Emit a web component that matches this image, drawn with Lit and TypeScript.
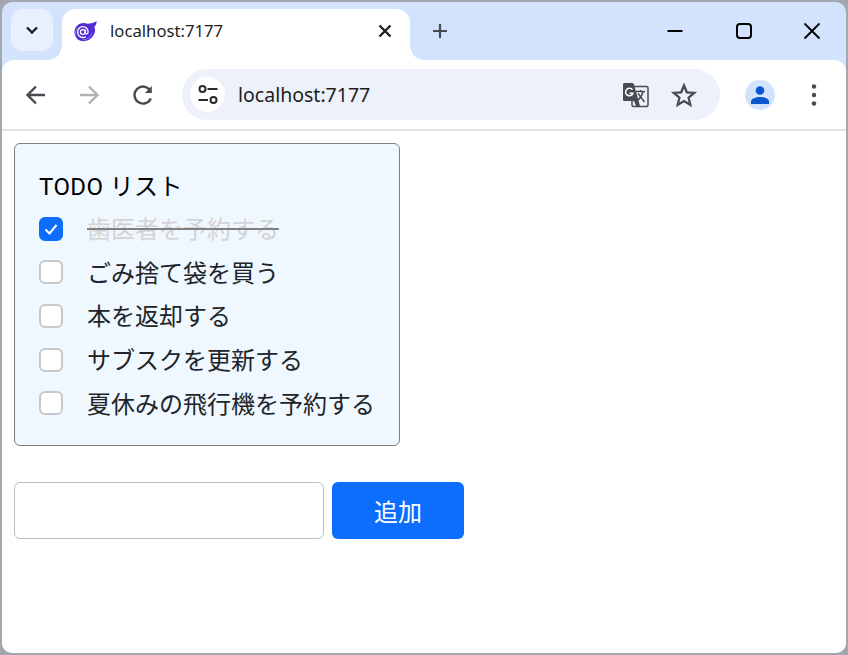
import { LitElement, html, css } from "lit";
import { customElement, state } from "lit/decorators.js";

@customElement("app-root")
export class AppRoot extends LitElement {
  static styles = css`
    :host { display: block; position: relative; width: 848px; height: 655px; overflow: hidden; background: #a3a7b0; font-family: "Noto Sans", "Noto Sans CJK JP", sans-serif; }
    * { box-sizing: border-box; }
    .window { position: relative; margin: 2px; width: 844px; height: 651px; border-radius: 10px; overflow: hidden; background: #d3e3fd; display: flex; flex-direction: column; }
    .strip { height: 58px; flex: none; display: flex; align-items: flex-start; padding: 7px 0 0 9px; position: relative; }
    .tabsearch { width: 42px; height: 42px; border-radius: 12px; background: #e9f0fd; display: flex; align-items: center; justify-content: center; margin-right: 9px; }
    .tab { width: 348px; height: 51px; background: #fff; border-radius: 14px 14px 0 0; position: relative; display: flex; align-items: center; padding: 0 0 8px 11px; z-index: 1; }
    .tab::before, .tab::after { content: ""; position: absolute; bottom: 0; width: 14px; height: 14px; }
    .tab::before { left: -14px; background: radial-gradient(circle at 0 0, transparent 13.5px, #fff 14px); }
    .tab::after { right: -14px; background: radial-gradient(circle at 100% 0, transparent 13.5px, #fff 14px); }
    .tabtitle { margin-left: 13px; font-size: 16.7px; color: #1f1f1f; flex: 1; white-space: nowrap; }
    .tabclose { width: 20px; height: 20px; display: flex; margin-right: 15px; }
    .plus { margin-left: 20px; margin-top: 12px; width: 20px; height: 20px; display: flex; }
    .caption { margin-left: auto; display: flex; height: 44px; align-items: center; }
    .capbtn { width: 68px; display: flex; justify-content: center; align-items: center; }
    .capbtn.shift { margin-left: -1px; margin-right: 1px; }
    .toolbar { height: 71px; flex: none; background: #fff; border-radius: 12px 12px 0 0; border-bottom: 2px solid #e3e3e3; display: flex; align-items: center; padding: 0 0 0 19px; position: relative; }
    .nav { width: 54px; display: flex; }
    .navrow { display: flex; width: 161px; padding-left: 1px; }
    .omni { width: 538px; height: 51px; border-radius: 26px; background: #ecf1fa; display: flex; align-items: center; padding: 0 22px 0 8px; }
    .site { width: 35px; height: 35px; border-radius: 50%; background: #fff; display: flex; align-items: center; justify-content: center; margin-right: 13px; }
    .url { font-size: 19.5px; color: #1f1f1f; flex: 1; white-space: nowrap; }
    .omni svg.t { margin-right: 20px; }
    .avatar { margin-left: 25px; width: 30px; height: 30px; border-radius: 50%; background: #d3e3fd; display: flex; align-items: center; justify-content: center; }
    .kebab { margin-left: 36px; display: flex; }
    .content { flex: 1; background: #fff; padding: 12px; }
    .card { width: 386px; height: 303px; background: #eff7ff; border: 1px solid #7b8087; border-radius: 6px; padding: 24px; }
    .title { font-family: Roboto, "Noto Sans CJK JP", sans-serif; font-size: 24px; line-height: 36px; letter-spacing: 0.4px; color: #000; margin-top: 1px; margin-bottom: 1px; }
    .row { display: flex; align-items: center; height: 43.6px; font-size: 24px; color: #212529; }
    .box { width: 24px; height: 24px; flex: none; border: 2px solid #c6c8cb; border-radius: 6px; background: #fff; margin: 2px 24px 0 0; display: flex; align-items: center; justify-content: center; }
    .box.on { background: #0d6efd; border-color: #0d6efd; }
    .done { color: #d3d3d3; text-decoration: line-through; text-decoration-color: #808080; text-decoration-thickness: 2px; }
    .form { display: flex; gap: 8px; margin-top: 36px; }
    .input { width: 310px; height: 57px; border: 1px solid #bcc0c4; border-radius: 6px; background: #fff; }
    .btn { width: 132px; height: 57px; border-radius: 6px; background: #0d6efd; color: #fff; font-size: 24px; display: flex; align-items: center; justify-content: center; }
  `;

  @state() items = [
    { t: "歯医者を予約する", d: true },
    { t: "ごみ捨て袋を買う", d: false },
    { t: "本を返却する", d: false },
    { t: "サブスクを更新する", d: false },
    { t: "夏休みの飛行機を予約する", d: false },
  ];

  render() {
    return html`
      <div class="window">
        <div class="strip">
          <div class="tabsearch">
            <svg width="16" height="16" viewBox="0 0 16 16"><path d="M3 5.500 8 10.500 13 5.500" fill="none" stroke="#1f1f1f" stroke-width="2.400"/></svg>
          </div>
          <div class="tab">
            <svg width="24" height="24" viewBox="0 0 24 24">
              <path d="M23.500 2c.3 2.500-.6 4.500-2.200 5.800 1.100 2.200 1.100 4.700 0 7C19.500 19 15.500 22.200 10.500 22.200 5.300 22.200 1.500 18.200 1.500 13 1.500 8 5.500 4 10.500 4c1.500 0 2.800.2 4 .7 3.300-.1 6.700-.9 9-2.700Z" fill="#512bd4"/>
              <path d="M3.300 17.500C2 15 2.300 11 4.800 8.700" fill="none" stroke="#8f78e6" stroke-width="1"/>
              <circle cx="9.800" cy="13" r="2.400" fill="none" stroke="#fff" stroke-width="1.300"/>
              <path d="M12.200 10.600v3.200c0 1.700 2.800 1.700 2.900-.9.100-3-2.200-5.200-5.200-5.200-3 0-5.300 2.400-5.300 5.400s2.300 5.400 5.300 5.400c1.100 0 2.100-.3 2.900-.8" fill="none" stroke="#fff" stroke-width="1.300"/>
              <path d="M9 20.800c4 .2 8.800-2 10.200-6.500" fill="none" stroke="#8f78e6" stroke-width="1"/>
            </svg>
            <span class="tabtitle">localhost:7177</span>
            <span class="tabclose"><svg width="20" height="20" viewBox="0 0 20 20"><path d="M4.500 4.500 15.500 15.500M15.500 4.500 4.500 15.500" stroke="#1f1f1f" stroke-width="2.400"/></svg></span>
          </div>
          <span class="plus"><svg width="20" height="20" viewBox="0 0 20 20"><path d="M10 3V17M3 10H17" stroke="#474a50" stroke-width="2.200"/></svg></span>
          <div class="caption">
            <span class="capbtn shift"><svg width="20" height="20" viewBox="0 0 20 20"><path d="M2.500 10H17.500" stroke="#000" stroke-width="2"/></svg></span>
            <span class="capbtn"><svg width="20" height="20" viewBox="0 0 20 20"><rect x="3" y="3" width="14" height="14" rx="3" fill="none" stroke="#000" stroke-width="2"/></svg></span>
            <span class="capbtn"><svg width="20" height="20" viewBox="0 0 20 20"><path d="M2.500 2.500 17.500 17.500M17.500 2.500 2.500 17.500" stroke="#000" stroke-width="1.800"/></svg></span>
          </div>
        </div>
        <div class="toolbar">
          <div class="navrow">
            <span class="nav"><svg width="28" height="28" viewBox="0 0 28 28"><path d="M23 14H6M14 5.500 5.500 14 14 22.500" fill="none" stroke="#474a50" stroke-width="2.400"/></svg></span>
            <span class="nav"><svg width="28" height="28" viewBox="0 0 28 28"><path d="M5 14H22M14 5.500 22.500 14 14 22.500" fill="none" stroke="#b0b1b3" stroke-width="2.400"/></svg></span>
            <span class="nav"><svg width="28" height="28" viewBox="0 0 28 28"><path d="M21.800 17.500A8.500 8.500 0 1 1 21 9.200" fill="none" stroke="#474a50" stroke-width="2.400"/><path d="M22.800 5V12H16Z" fill="#474a50"/></svg></span>
          </div>
          <div class="omni">
            <span class="site"><svg width="24" height="24" viewBox="0 0 24 24"><circle cx="6.500" cy="6" r="3" fill="none" stroke="#2a2b2e" stroke-width="2"/><path d="M11.500 6H21.500M2.500 17H12" stroke="#2a2b2e" stroke-width="2"/><circle cx="17.500" cy="17" r="3" fill="none" stroke="#2a2b2e" stroke-width="2"/></svg></span>
            <span class="url">localhost:7177</span>
            <svg class="t" width="28" height="28" viewBox="0 0 28 28">
              <rect x="10" y="5.500" width="16" height="20" rx="1.500" fill="#ecf1fa" stroke="#474a50" stroke-width="1.500"/>
              <path d="M1 3.500c0-1 .8-1.500 1.500-1.500H10c1 0 1.500.5 2 1.500L18 25h-4l-2-5H2.500C1.600 20 1 19.500 1 18.500Z" fill="#474a50"/>
              <path d="M10.500 8.800A3.800 3.800 0 1 0 11 12.200H7.500" fill="none" stroke="#fff" stroke-width="1.500"/>
              <path d="M14 10.500H23M18.500 9V10.500M21 10.500C20 15 17.500 18 15 19.500M16 12.500 22.500 21" fill="none" stroke="#474a50" stroke-width="1.500"/>
            </svg>
            <svg width="28" height="28" viewBox="0 0 28 28"><path d="M14 4.500 16.800 11.300 24.200 11.900 18.600 16.700 20.300 23.900 14 20 7.700 23.900 9.400 16.700 3.800 11.900 11.200 11.300Z" fill="none" stroke="#474a50" stroke-width="2.300"/></svg>
          </div>
          <span class="avatar"><svg width="20" height="20" viewBox="0 0 20 20"><circle cx="10" cy="5.500" r="4.300" fill="#0b57d0"/><path d="M1 19v-2.500C1 13.500 6 12 10 12s9 1.500 9 4.500V19Z" fill="#0b57d0"/></svg></span>
          <span class="kebab"><svg width="6" height="24" viewBox="0 0 6 24"><circle cx="3" cy="3.500" r="2.200" fill="#474a50"/><circle cx="3" cy="12" r="2.200" fill="#474a50"/><circle cx="3" cy="20.500" r="2.200" fill="#474a50"/></svg></span>
        </div>
        <div class="content">
          <div class="card">
            <div class="title">TODO リスト</div>
            ${this.items.map(i => html`
              <div class="row">
                <span class="box ${i.d ? "on" : ""}">
                  ${i.d ? html`<svg width="18" height="18" viewBox="0 0 18 18"><path d="M3.500 9.500 7.500 13.500 14.500 5" fill="none" stroke="#fff" stroke-width="2"/></svg>` : ""}
                </span>
                <span class="${i.d ? "done" : ""}">${i.t}</span>
              </div>`)}
          </div>
          <div class="form">
            <div class="input"></div>
            <div class="btn">追加</div>
          </div>
        </div>
      </div>`;
  }
}
